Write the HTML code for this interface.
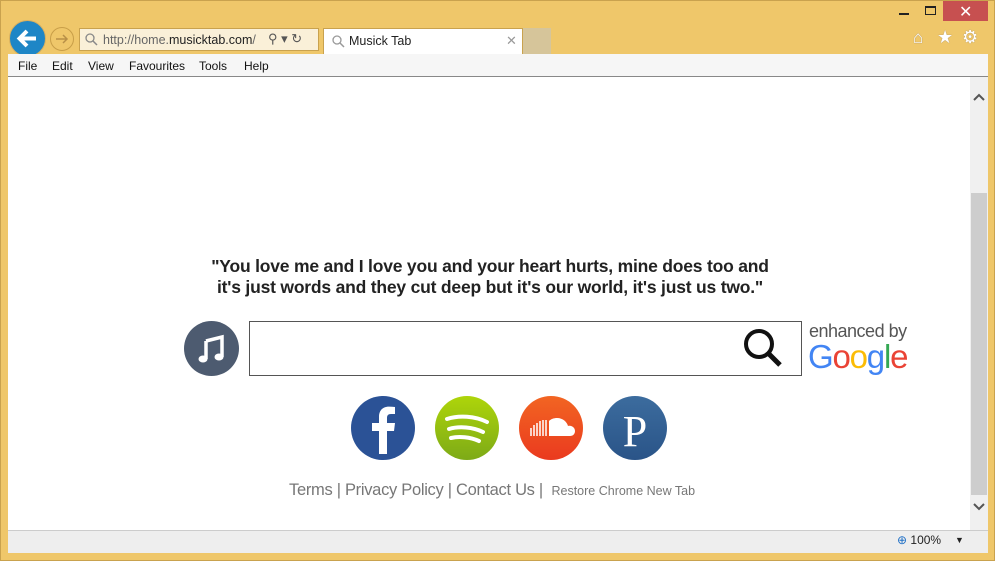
<!DOCTYPE html>
<html><head><meta charset="utf-8"><style>
*{margin:0;padding:0;box-sizing:border-box}
body{width:995px;height:561px;background:#EFC76A;position:relative;overflow:hidden;font-family:"Liberation Sans",sans-serif}
.abs{position:absolute}
.m{position:absolute;top:59px;font-size:12px;color:#111}
</style></head><body>
<div class="abs" style="left:0;top:0;width:995px;height:561px;border:1px solid #C9A24E"></div>
<div class="abs" style="left:943px;top:1px;width:45px;height:20px;background:#C75050"></div>
<div class="abs" style="left:959px;top:2px;color:#fff;font-size:16px">✕</div>
<div class="abs" style="left:899px;top:13px;width:10px;height:2px;background:#222"></div>
<div class="abs" style="left:925px;top:6px;width:11px;height:9px;border:1px solid #222;border-top-width:2px"></div>
<div class="abs" style="left:9px;top:20px;width:37px;height:37px;border-radius:50%;background:#1E86C6;border:1px solid #d8b060"></div>
<svg class="abs" style="left:9px;top:20px" width="37" height="37"><path d="M27 18.5H11M18 11l-7.5 7.5L18 26" stroke="#fff" stroke-width="4" fill="none"/></svg>
<div class="abs" style="left:50px;top:27px;width:24px;height:24px;border-radius:50%;border:1px solid #C89E48"></div>
<svg class="abs" style="left:50px;top:27px" width="24" height="24"><path d="M6 12h11M13 8l4 4-4 4" stroke="#B89048" stroke-width="1.5" fill="none"/></svg>
<div class="abs" style="left:79px;top:28px;width:240px;height:23px;background:#FAF0D8;border:1px solid #C9A24E"></div>
<svg class="abs" style="left:84px;top:32px" width="14" height="14"><circle cx="6" cy="6" r="4" stroke="#888" stroke-width="1.3" fill="none"/><path d="M9 9l4 4" stroke="#888" stroke-width="1.5"/></svg>
<div class="abs" style="left:103px;top:33px;font-size:12.5px;color:#666">http://home.<span style="color:#222">musicktab.com</span>/</div>
<div class="abs" style="left:268px;top:31px;font-size:13px;color:#555">⚲ ▾ ↻</div>
<div class="abs" style="left:323px;top:28px;width:200px;height:27px;background:#fff;border:1px solid #C9A24E;border-bottom:none"></div>
<svg class="abs" style="left:331px;top:34px" width="14" height="14"><circle cx="6" cy="6" r="4" stroke="#999" stroke-width="1.3" fill="none"/><path d="M9 9l4 4" stroke="#999" stroke-width="1.5"/></svg>
<div class="abs" style="left:349px;top:34px;font-size:12.5px;color:#222">Musick Tab</div>
<div class="abs" style="left:506px;top:33px;font-size:13px;color:#999">✕</div>
<div class="abs" style="left:523px;top:28px;width:28px;height:27px;background:#D6C59A"></div>
<div class="abs" style="left:913px;top:28px;font-size:17px;color:#fff;text-shadow:0 0 1px #876">⌂</div>
<div class="abs" style="left:937px;top:27px;font-size:18px;color:#fff;text-shadow:0 0 1px #876">★</div>
<div class="abs" style="left:962px;top:27px;font-size:18px;color:#fff;text-shadow:0 0 1px #876">⚙</div>
<div class="abs" style="left:8px;top:54px;width:980px;height:23px;background:#F6F6F6;border-bottom:1px solid #888"></div>
<span class="m" style="left:18px">File</span><span class="m" style="left:52px">Edit</span><span class="m" style="left:88px">View</span><span class="m" style="left:129px">Favourites</span><span class="m" style="left:199px">Tools</span><span class="m" style="left:244px">Help</span>
<div class="abs" style="left:8px;top:77px;width:980px;height:453px;background:#fff"></div>
<div class="abs" style="left:970px;top:77px;width:18px;height:453px;background:#F0F0F0"></div>
<div class="abs" style="left:971px;top:193px;width:16px;height:302px;background:#CDCDCD"></div>
<svg class="abs" style="left:971px;top:90px" width="16" height="14"><path d="M3 10l5-5 5 5" stroke="#555" stroke-width="2" fill="none"/></svg>
<svg class="abs" style="left:971px;top:500px" width="16" height="14"><path d="M3 4l5 5 5-5" stroke="#555" stroke-width="2" fill="none"/></svg>
<div class="abs" style="left:8px;top:530px;width:980px;height:23px;background:#EEEEEE;border-top:1px solid #ccc"></div>
<div class="abs" style="left:897px;top:533px;font-size:12px;color:#222"><span style="color:#1E6FC6">⊕</span> 100%</div>
<div class="abs" style="left:955px;top:535px;font-size:9px;color:#222">▼</div>
<div class="abs" style="left:170px;top:256px;width:640px;text-align:center;font-size:17.5px;font-weight:bold;color:#222;line-height:21px;letter-spacing:-0.2px">"You love me and I love you and your heart hurts, mine does too and<br>it's just words and they cut deep but it's our world, it's just us two."</div>
<div class="abs" style="left:184px;top:321px;width:55px;height:55px;border-radius:50%;background:#4D5B70"></div>
<svg class="abs" style="left:184px;top:321px" width="55" height="55"><path d="M22 20l16-4v20M22 20v18" stroke="#fff" stroke-width="3.5" fill="none"/><ellipse cx="19" cy="38" rx="4.5" ry="3.5" fill="#fff"/><ellipse cx="35" cy="36" rx="4.5" ry="3.5" fill="#fff"/></svg>
<div class="abs" style="left:249px;top:321px;width:553px;height:55px;border:1px solid #555"></div>
<svg class="abs" style="left:740px;top:325px" width="46" height="46"><circle cx="19" cy="19" r="13" stroke="#111" stroke-width="4" fill="none"/><path d="M28 28l12 12" stroke="#111" stroke-width="5"/></svg>
<div class="abs" style="left:809px;top:321px;font-size:18px;color:#555;letter-spacing:-0.5px">enhanced by</div>
<div class="abs" style="left:808px;top:339px;font-size:33px;line-height:36px;letter-spacing:-1.2px"><span style="color:#4285F4">G</span><span style="color:#EA4335">o</span><span style="color:#FBBC05">o</span><span style="color:#4285F4">g</span><span style="color:#34A853">l</span><span style="color:#EA4335">e</span></div>
<svg class="abs" style="left:340px;top:390px" width="340" height="80">
<defs>
<linearGradient id="sp" x1="0" y1="0" x2="0" y2="1"><stop offset="0" stop-color="#AED50A"/><stop offset="1" stop-color="#7DAA17"/></linearGradient>
<linearGradient id="sc" x1="0" y1="0" x2="0" y2="1"><stop offset="0" stop-color="#F26522"/><stop offset="1" stop-color="#EA3A1F"/></linearGradient>
<linearGradient id="pd" x1="0" y1="0" x2="0" y2="1"><stop offset="0" stop-color="#3C6C9E"/><stop offset="1" stop-color="#2A5488"/></linearGradient>
</defs>
<circle cx="43" cy="38" r="32" fill="#2B5296"/>
<path d="M47 64V41h7l1-8h-8v-5c0-2.5 1-4 4-4h4v-7c-2-.3-4-.4-6-.4-6 0-10 3.6-10 10v6.4h-7v8h7v23z" fill="#fff"/>
<circle cx="127" cy="38" r="32" fill="url(#sp)"/>
<path d="M107 29c12-4 28-3 40 3M109 39c10-3 24-2 34 3M111 48c8-2 19-1 28 3" stroke="#fff" stroke-width="4" stroke-linecap="round" fill="none"/>
<circle cx="211" cy="38" r="32" fill="url(#sc)"/>
<path d="M209 46V31c2-2 5-3 8-3 6 0 10 4 11 8 4-1 7 2 7 5s-2 5-5 5z" fill="#fff"/>
<path d="M191 38v8M194 35v11M197 33v13M200 31v15M203 30v16M206 30v16" stroke="#fff" stroke-width="1.5"/>
<circle cx="295" cy="38" r="32" fill="url(#pd)"/>
<text x="295" y="56" font-family="Liberation Serif" font-size="44" fill="#fff" text-anchor="middle">P</text>
</svg>
<div class="abs" style="left:289px;top:481px;font-size:16.5px;color:#777;letter-spacing:-0.3px">Terms | Privacy Policy | Contact Us |&nbsp; <span style="font-size:12.5px;letter-spacing:0">Restore Chrome New Tab</span></div>
</body></html>
